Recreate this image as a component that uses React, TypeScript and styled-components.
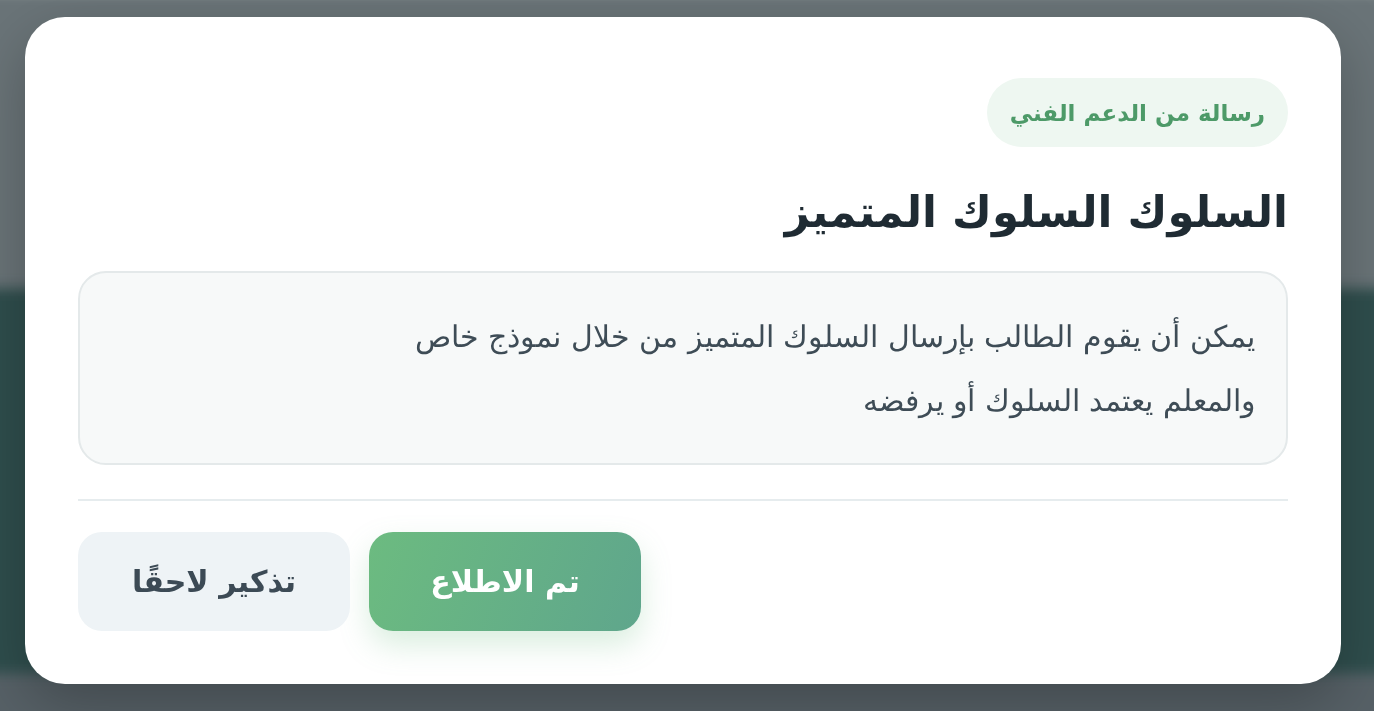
import React from "react"
import styled, { createGlobalStyle } from "styled-components"

const Global = createGlobalStyle`
        html, body {
                margin: 0;
                padding: 0;
                height: 100%;
                overflow: hidden;
        }
        body {
                font-family: "DejaVu Sans", "Noto Sans", sans-serif;
        }
`;

const Backdrop = styled.div`
        position: fixed;
        inset: 0;
        display: flex;
        flex-direction: column;
        filter: blur(6px);
        transform: scale(1.03);
`;

const Band = styled.div<{ $h: string; $bg: string }>`
        height: ${p => p.$h};
        background: ${p => p.$bg};
        flex-shrink: 0;
`;

const Stage = styled.div`
        position: relative;
        height: 100vh;
        padding: 17px 0 0 25px;
        box-sizing: border-box;
`;

const Modal = styled.div`
        direction: rtl;
        width: 1316px;
        height: 667px;
        box-sizing: border-box;
        background: #ffffff;
        border-radius: 40px;
        padding: 61px 53px 53px;
        display: flex;
        flex-direction: column;
        align-items: flex-start;
        box-shadow: 0 20px 60px rgba(0, 0, 0, 0.25);
`;

const Badge = styled.span`
        display: inline-flex;
        align-items: center;
        height: 69px;
        padding: 0 23px;
        box-sizing: border-box;
        border-radius: 35px;
        background: #eef7f1;
        color: #4d9a68;
        font-size: 23px;
        font-weight: bold;
`;

const Title = styled.h2`
        margin: 34px 0 27px;
        font-size: 43.5px;
        line-height: 63px;
        font-weight: bold;
        color: #1f2b33;
`;

const Body = styled.div`
        align-self: stretch;
        box-sizing: border-box;
        height: 194px;
        padding: 32px 31px;
        border: 2px solid #e4e9ea;
        border-radius: 28px;
        background: #f7f9f9;
        color: #3e4c56;
        font-size: 30px;
        line-height: 64px;
        font-weight: 300;
`;

const Divider = styled.hr`
        align-self: stretch;
        border: none;
        height: 2px;
        background: #e6ecee;
        margin: 34px 0 31px;
`;

const Actions = styled.div`
        align-self: stretch;
        display: flex;
        justify-content: flex-end;
        gap: 19px;
`;

const Button = styled.button<{ $primary?: boolean }>`
        width: 272px;
        height: 99px;
        border: none;
        border-radius: 24px;
        font-family: inherit;
        font-size: 30px;
        font-weight: bold;
        cursor: pointer;
        color: ${p => (p.$primary ? "#ffffff" : "#3c4a55")};
        background: ${p =>
                p.$primary ? "linear-gradient(110deg, #6cbb80 0%, #5fa68c 100%)" : "#eef3f6"};
        box-shadow: ${p => (p.$primary ? "0 14px 30px rgba(108, 187, 128, 0.25)" : "none")};
`;

export default function App() {
        return (
                <>
                        <Global />
                        <Backdrop>
                                <Band $h="290px" $bg="#6a7478" />
                                <Band $h="375px" $bg="#2f4e4d" />
                                <Band $h="80px" $bg="#576167" />
                        </Backdrop>
                        <Stage>
                                <Modal>
                                        <Badge>رسالة من الدعم الفني</Badge>
                                        <Title>السلوك السلوك المتميز</Title>
                                        <Body>
                                                يمكن أن يقوم الطالب بإرسال السلوك المتميز من خلال نموذج خاص
                                                <br />
                                                والمعلم يعتمد السلوك أو يرفضه
                                        </Body>
                                        <Divider />
                                        <Actions>
                                                <Button $primary>تم الاطلاع</Button>
                                                <Button>تذكير لاحقًا</Button>
                                        </Actions>
                                </Modal>
                        </Stage>
                </>
        )
}
